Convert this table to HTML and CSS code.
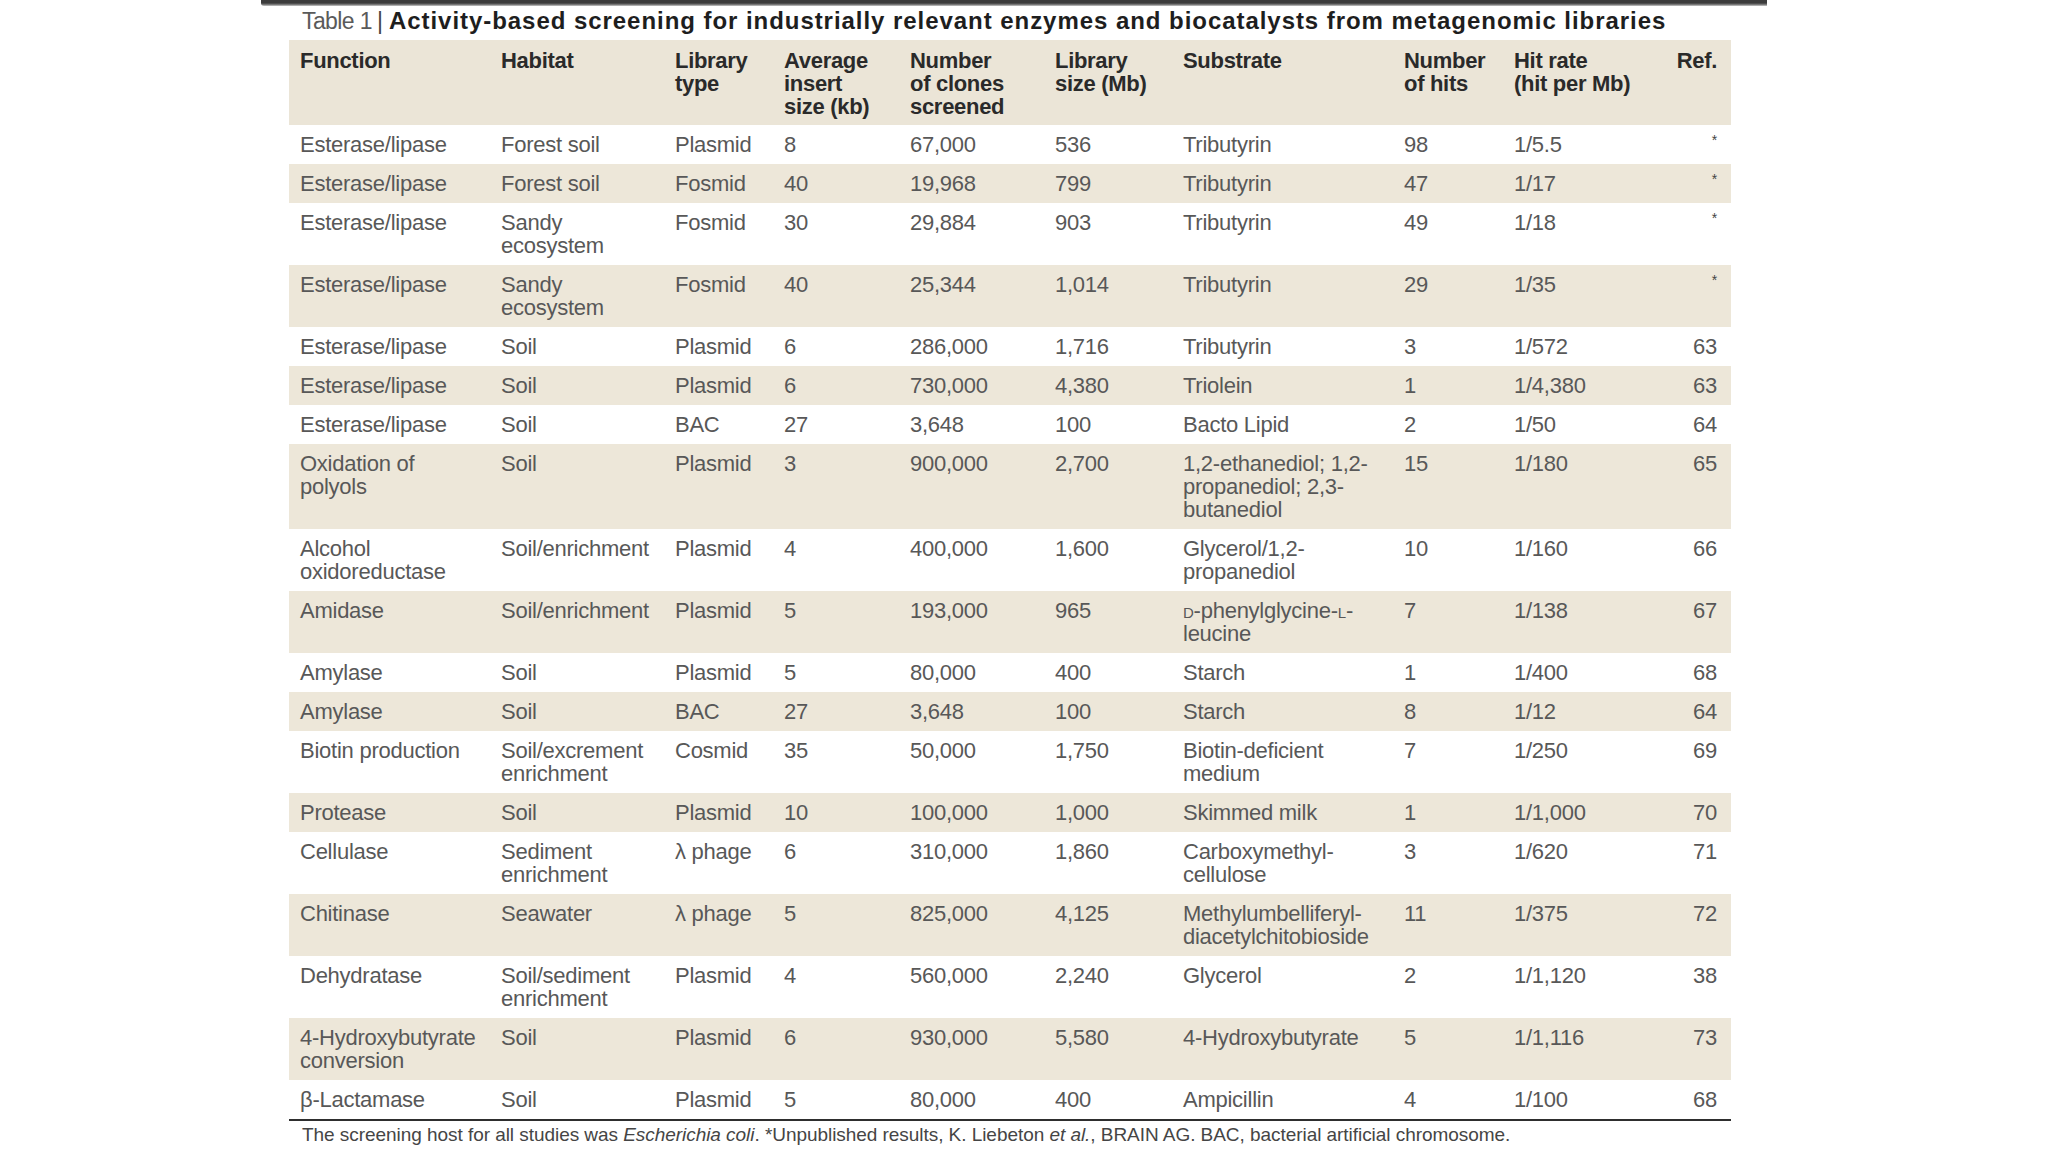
FILE: index.html
```html
<!DOCTYPE html>
<html lang="en">
<head>
<meta charset="utf-8">
<title>Table 1 | Activity-based screening</title>
<link rel="stylesheet" href="styles.css">
</head>
<body>
<div class="page">
  <div class="topbar"></div>
  <h1 class="title"><span class="label">Table 1</span><span class="sep">|</span><span class="heading">Activity-based screening for industrially relevant enzymes and biocatalysts from metagenomic libraries</span></h1>
  <table class="data">
    <colgroup>
      <col class="c1"><col class="c2"><col class="c3"><col class="c4"><col class="c5">
      <col class="c6"><col class="c7"><col class="c8"><col class="c9"><col class="c10">
    </colgroup>
    <thead>
      <tr>
        <th>Function</th>
        <th>Habitat</th>
        <th>Library<br>type</th>
        <th>Average<br>insert<br>size (kb)</th>
        <th>Number<br>of clones<br>screened</th>
        <th>Library<br>size (Mb)</th>
        <th>Substrate</th>
        <th>Number<br>of hits</th>
        <th>Hit rate<br>(hit per Mb)</th>
        <th>Ref.</th>
      </tr>
    </thead>
    <tbody>
      <tr><td>Esterase/lipase</td><td>Forest soil</td><td>Plasmid</td><td>8</td><td>67,000</td><td>536</td><td>Tributyrin</td><td>98</td><td>1/5.5</td><td><span class="ast">*</span></td></tr>
      <tr><td>Esterase/lipase</td><td>Forest soil</td><td>Fosmid</td><td>40</td><td>19,968</td><td>799</td><td>Tributyrin</td><td>47</td><td>1/17</td><td><span class="ast">*</span></td></tr>
      <tr><td>Esterase/lipase</td><td>Sandy<br>ecosystem</td><td>Fosmid</td><td>30</td><td>29,884</td><td>903</td><td>Tributyrin</td><td>49</td><td>1/18</td><td><span class="ast">*</span></td></tr>
      <tr><td>Esterase/lipase</td><td>Sandy<br>ecosystem</td><td>Fosmid</td><td>40</td><td>25,344</td><td>1,014</td><td>Tributyrin</td><td>29</td><td>1/35</td><td><span class="ast">*</span></td></tr>
      <tr><td>Esterase/lipase</td><td>Soil</td><td>Plasmid</td><td>6</td><td>286,000</td><td>1,716</td><td>Tributyrin</td><td>3</td><td>1/572</td><td>63</td></tr>
      <tr><td>Esterase/lipase</td><td>Soil</td><td>Plasmid</td><td>6</td><td>730,000</td><td>4,380</td><td>Triolein</td><td>1</td><td>1/4,380</td><td>63</td></tr>
      <tr><td>Esterase/lipase</td><td>Soil</td><td>BAC</td><td>27</td><td>3,648</td><td>100</td><td>Bacto Lipid</td><td>2</td><td>1/50</td><td>64</td></tr>
      <tr><td>Oxidation of<br>polyols</td><td>Soil</td><td>Plasmid</td><td>3</td><td>900,000</td><td>2,700</td><td>1,2-ethanediol; 1,2-<br>propanediol; 2,3-<br>butanediol</td><td>15</td><td>1/180</td><td>65</td></tr>
      <tr><td>Alcohol<br>oxidoreductase</td><td>Soil/enrichment</td><td>Plasmid</td><td>4</td><td>400,000</td><td>1,600</td><td>Glycerol/1,2-<br>propanediol</td><td>10</td><td>1/160</td><td>66</td></tr>
      <tr><td>Amidase</td><td>Soil/enrichment</td><td>Plasmid</td><td>5</td><td>193,000</td><td>965</td><td><span class="sc">d</span>-phenylglycine-<span class="sc">l</span>-<br>leucine</td><td>7</td><td>1/138</td><td>67</td></tr>
      <tr><td>Amylase</td><td>Soil</td><td>Plasmid</td><td>5</td><td>80,000</td><td>400</td><td>Starch</td><td>1</td><td>1/400</td><td>68</td></tr>
      <tr><td>Amylase</td><td>Soil</td><td>BAC</td><td>27</td><td>3,648</td><td>100</td><td>Starch</td><td>8</td><td>1/12</td><td>64</td></tr>
      <tr><td>Biotin production</td><td>Soil/excrement<br>enrichment</td><td>Cosmid</td><td>35</td><td>50,000</td><td>1,750</td><td>Biotin-deficient<br>medium</td><td>7</td><td>1/250</td><td>69</td></tr>
      <tr><td>Protease</td><td>Soil</td><td>Plasmid</td><td>10</td><td>100,000</td><td>1,000</td><td>Skimmed milk</td><td>1</td><td>1/1,000</td><td>70</td></tr>
      <tr><td>Cellulase</td><td>Sediment<br>enrichment</td><td>λ phage</td><td>6</td><td>310,000</td><td>1,860</td><td>Carboxymethyl-<br>cellulose</td><td>3</td><td>1/620</td><td>71</td></tr>
      <tr><td>Chitinase</td><td>Seawater</td><td>λ phage</td><td>5</td><td>825,000</td><td>4,125</td><td>Methylumbelliferyl-<br>diacetylchitobioside</td><td>11</td><td>1/375</td><td>72</td></tr>
      <tr><td>Dehydratase</td><td>Soil/sediment<br>enrichment</td><td>Plasmid</td><td>4</td><td>560,000</td><td>2,240</td><td>Glycerol</td><td>2</td><td>1/1,120</td><td>38</td></tr>
      <tr><td>4-Hydroxybutyrate<br>conversion</td><td>Soil</td><td>Plasmid</td><td>6</td><td>930,000</td><td>5,580</td><td>4-Hydroxybutyrate</td><td>5</td><td>1/1,116</td><td>73</td></tr>
      <tr><td>β-Lactamase</td><td>Soil</td><td>Plasmid</td><td>5</td><td>80,000</td><td>400</td><td>Ampicillin</td><td>4</td><td>1/100</td><td>68</td></tr>
    </tbody>
  </table>
  <p class="foot">The screening host for all studies was <i>Escherichia coli</i>. *Unpublished results, K. Liebeton <i>et al.</i>, BRAIN AG. BAC, bacterial artificial chromosome.</p>
</div>
</body>
</html>
```
FILE: styles.css
```css
html, body {
  margin: 0;
  padding: 0;
  background: #ffffff;
}

body {
  font-family: "Liberation Sans", Arial, Helvetica, sans-serif;
  color: #555555;
}

.page {
  width: 1506px;
  margin: 0 0 0 261px;
}

.topbar {
  height: 6px;
  background: linear-gradient(to bottom, #3c3c3c 0, #3c3c3c 3px, #8a8a8a 5px, #d0d0d0 6px);
  border-radius: 0 0 0 3px;
}

.title {
  margin: 0;
  padding: 0 0 0 41px;
  height: 34px;
  line-height: 30px;
  font-size: 23px;
  font-weight: normal;
  white-space: nowrap;
}

.title .label {
  color: #5a5a5a;
  letter-spacing: -0.6px;
}

.title .sep {
  display: inline-block;
  margin: 0 6px 0 5px;
  color: #444;
}

.title .heading {
  font-size: 24px;
  font-weight: bold;
  letter-spacing: 0.95px;
  color: #1e1e1e;
}

.data {
  margin-left: 28px;
  width: 1442px;
  border-collapse: collapse;
  table-layout: fixed;
  border-bottom: 2px solid #2e2e2e;
}

.c1 { width: 212px; }
.c2 { width: 174px; }
.c3 { width: 109px; }
.c4 { width: 126px; }
.c5 { width: 145px; }
.c6 { width: 128px; }
.c7 { width: 221px; }
.c8 { width: 110px; }
.c9 { width: 136px; }
.c10 { width: 81px; }

.data th,
.data td {
  padding: 8px 4px 8px 0;
  text-align: left;
  vertical-align: top;
  font-size: 22px;
  line-height: 23px;
  white-space: nowrap;
}

.data th {
  padding-top: 9px;
  padding-bottom: 7px;
  font-weight: bold;
  color: #2a2a2a;
  letter-spacing: -0.3px;
}

.data td {
  color: #585858;
  letter-spacing: -0.25px;
}

.data th:first-child,
.data td:first-child {
  padding-left: 11px;
}

.data th:last-child,
.data td:last-child {
  text-align: right;
  padding-right: 14px;
}

.data thead tr {
  background: #ebe5d7;
}

.data tbody tr:nth-child(even) {
  background: #ede7d9;
}

.ast {
  font-size: 14px;
  line-height: 14px;
  vertical-align: top;
  color: #444;
}

.sc {
  font-variant: small-caps;
}

.foot {
  margin: 3px 0 0 0;
  padding-left: 41px;
  font-size: 19px;
  line-height: 22px;
  color: #454545;
  letter-spacing: -0.05px;
  white-space: nowrap;
}
```
